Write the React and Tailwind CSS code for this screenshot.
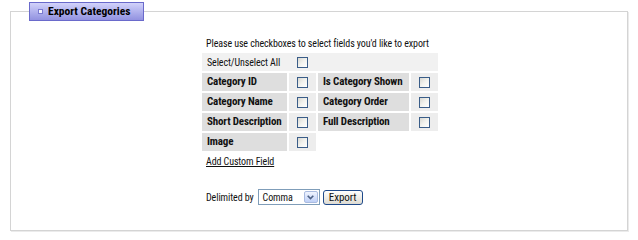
import React from "react";

const Check = () => (
  <span className="inline-block h-[11px] w-[11px] border border-[#3a5d88] bg-gradient-to-br from-[#d8d8d2] via-[#f2f2ee] to-white" />
);

const Label = ({ children }) => (
  <div className="flex h-[18px] items-center whitespace-nowrap bg-[#dedede] pl-[5px] text-[11px] font-bold tracking-[-0.15px] text-[#111]">
    {children}
  </div>
);

const Box = () => (
  <div className="flex h-[18px] items-center justify-center bg-[#ededed]">
    <Check />
  </div>
);

export default function App() {
  return (
    <div className="h-[240px] w-[638px] bg-white pl-[10px] pt-[2px] font-['Roboto_Condensed',sans-serif]">
      <fieldset className="h-[229px] w-[618px] border border-[#d4d4d4] shadow-[1px_1px_0_#ebebeb]">
        <legend className="ml-[18px] flex h-[19px] w-[115px] items-center gap-[5px] border border-[#6a6acb] bg-gradient-to-b from-[#d2d2fa] to-[#9292e0] pl-[8px] text-[11.5px] font-bold text-black">
          <span className="h-[5px] w-[5px] border border-[#7a7ad0] bg-[#f4f4ff]" />
          Export Categories
        </legend>

        <div className="ml-[191px] mt-[16px] w-[236px] text-[10px] tracking-[-0.1px] text-[#111]">
          <p className="mb-[2px] whitespace-nowrap pl-[4px] leading-[14px]">
            Please use checkboxes to select fields you'd like to export
          </p>

          <div className="grid grid-cols-[85px_27px_91px_27px] gap-[2px]">
            <div className="col-span-4 flex h-[18px] items-center bg-[#f1f1f1]">
              <span className="w-[87px] pl-[5px]">Select/Unselect All</span>
              <span className="flex w-[27px] justify-center">
                <Check />
              </span>
            </div>

            <Label>Category ID</Label>
            <Box />
            <Label>Is Category Shown</Label>
            <Box />

            <Label>Category Name</Label>
            <Box />
            <Label>Category Order</Label>
            <Box />

            <Label>Short Description</Label>
            <Box />
            <Label>Full Description</Label>
            <Box />

            <Label>Image</Label>
            <Box />
          </div>

          <a className="mt-[4px] block pl-[4px] leading-[14px] underline">Add Custom Field</a>

          <div className="mt-[20px] flex items-center pl-[4px]">
            <span className="mr-[4px]">Delimited by</span>
            <div className="flex h-[16px] w-[62px] items-center border border-[#7f9db9] bg-white">
              <span className="flex-1 pl-[4px]">Comma</span>
              <span className="mr-[1px] flex h-[12px] w-[14px] items-center justify-center rounded-[2px] border border-[#a9bbe0] bg-gradient-to-b from-[#f0f4fe] to-[#bfd0f7]">
                <svg width="7" height="5" viewBox="0 0 7 5">
                  <path d="M0.7 0.7 L3.5 3.6 L6.3 0.7" stroke="#4d6185" strokeWidth="1.6" fill="none" />
                </svg>
              </span>
            </div>
            <button className="ml-[3px] h-[15px] w-[40px] rounded-[3px] border border-[#1f4a8a] bg-gradient-to-b from-white to-[#dedbd2] text-[11px] leading-none">
              Export
            </button>
          </div>
        </div>
      </fieldset>
    </div>
  );
}
